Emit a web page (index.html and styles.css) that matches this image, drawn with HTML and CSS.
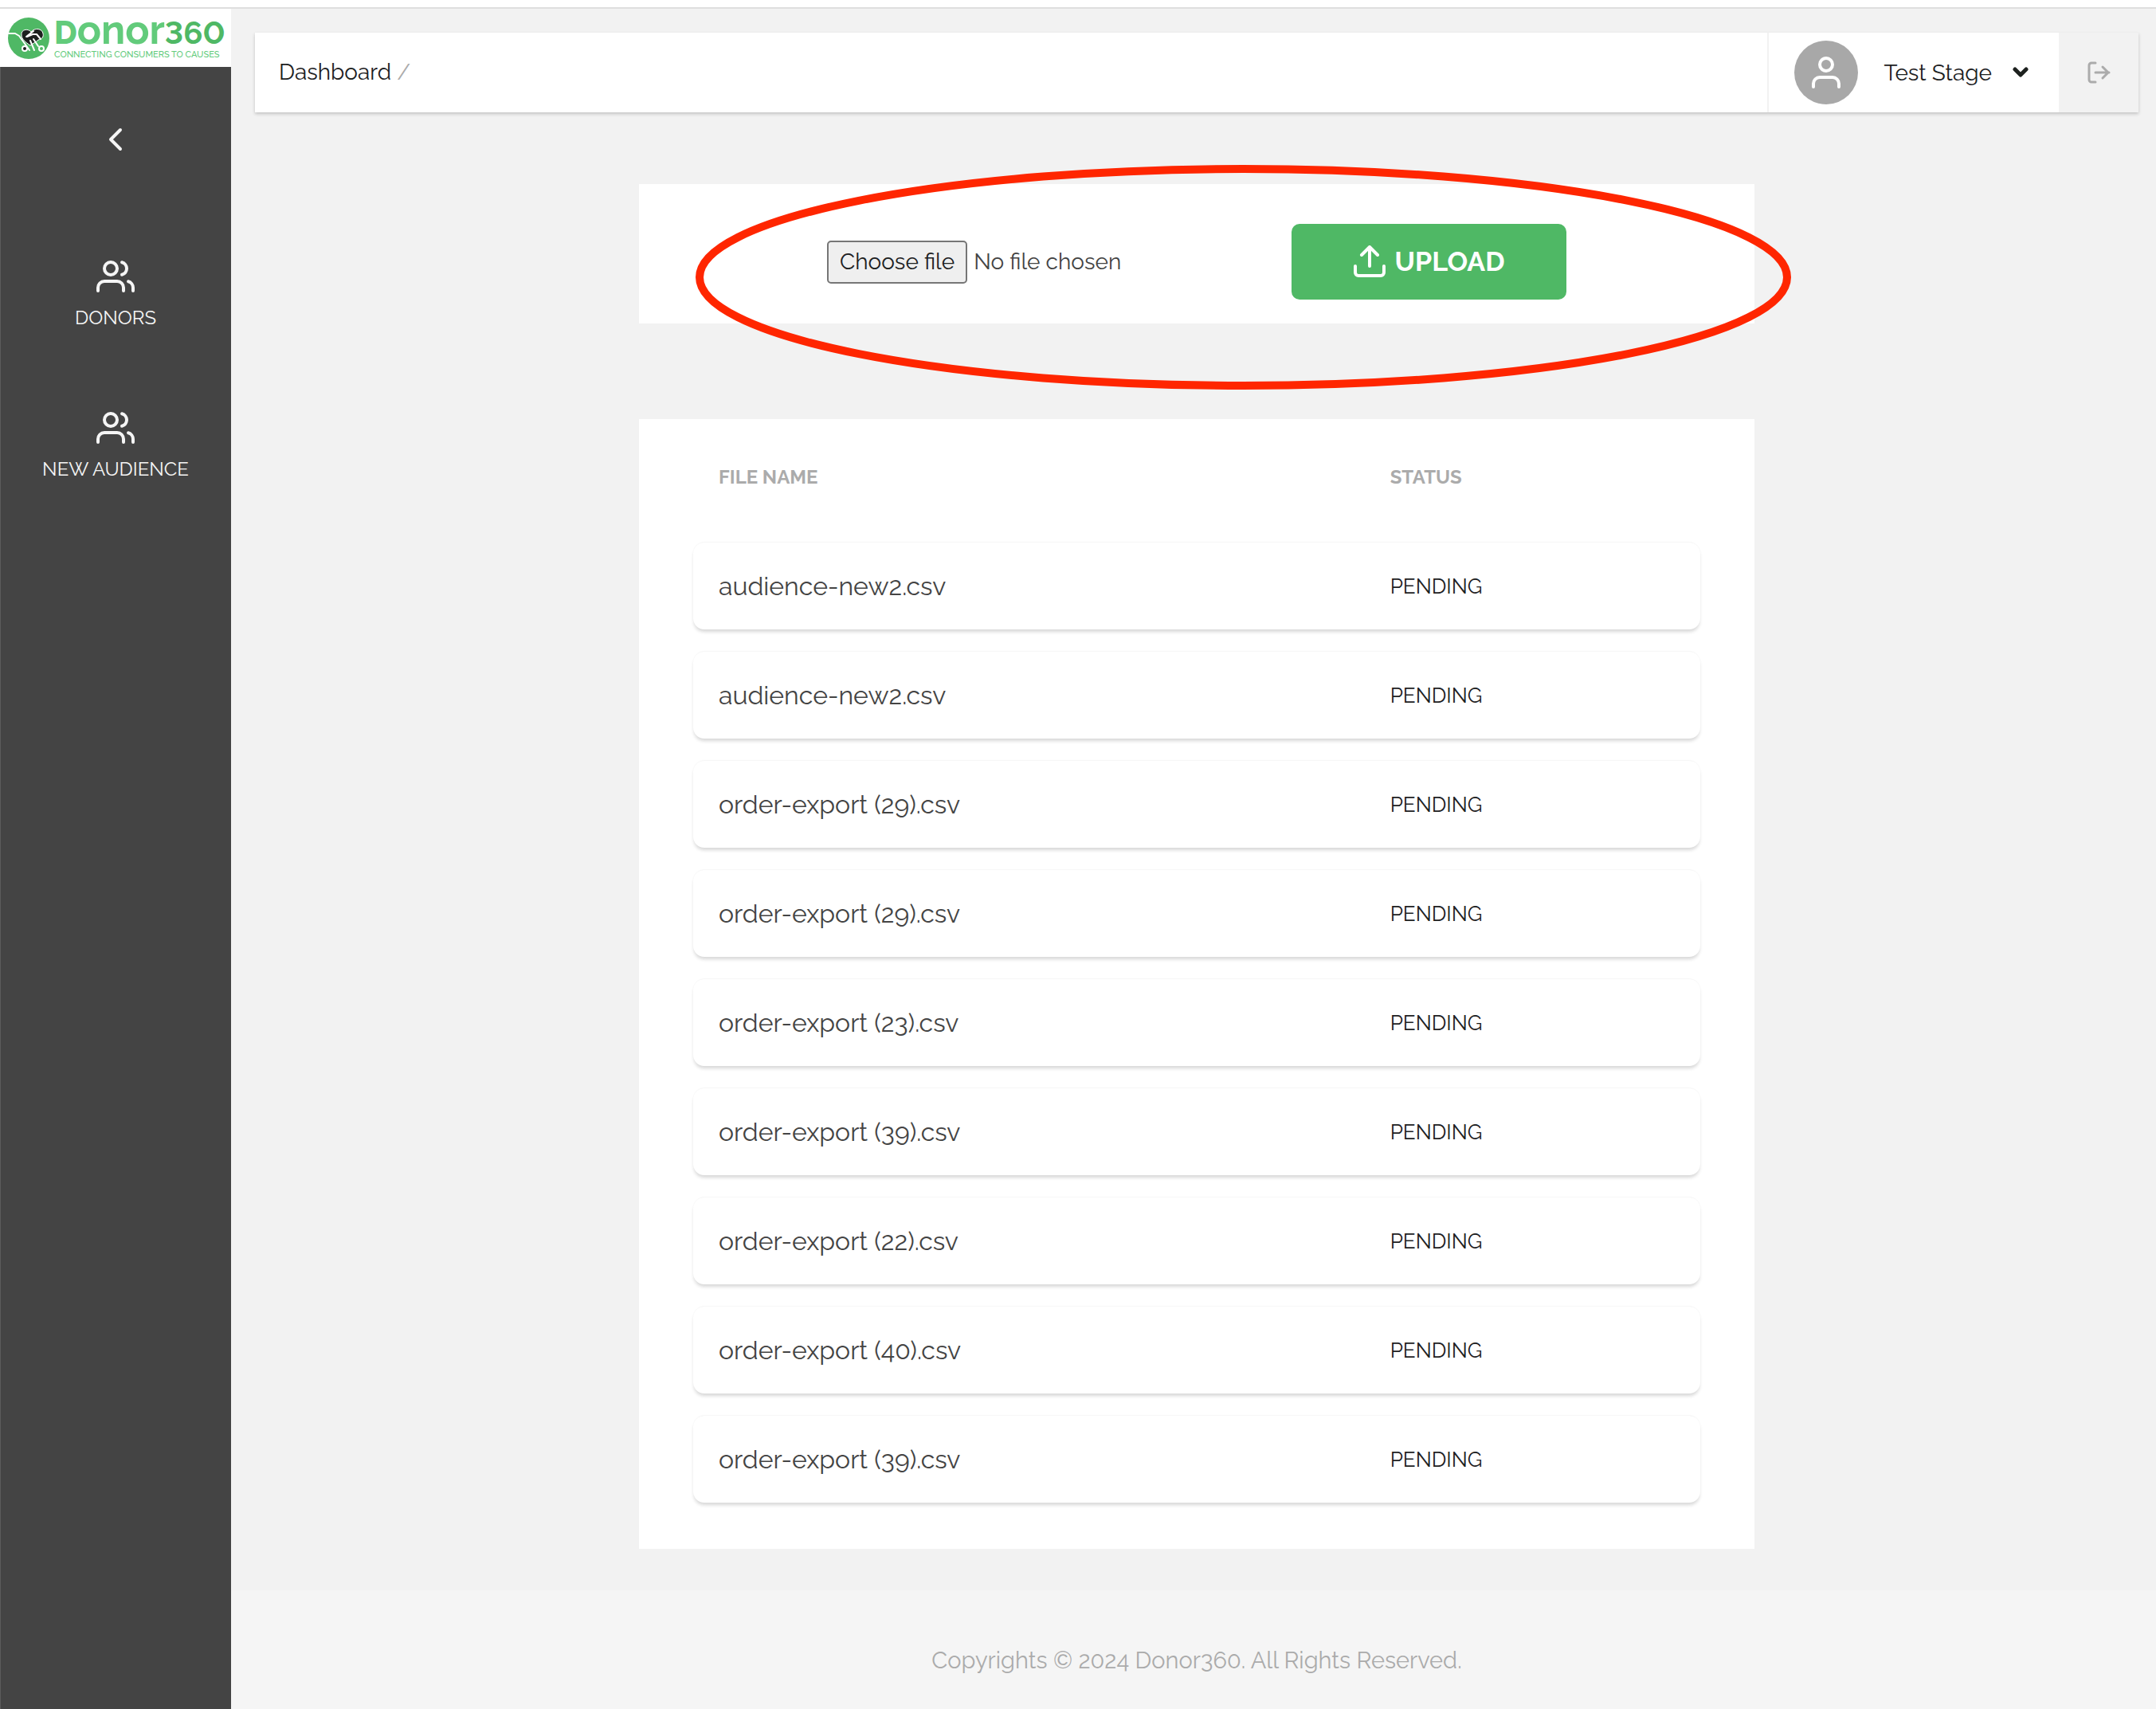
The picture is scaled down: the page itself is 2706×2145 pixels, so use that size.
FILE: index.html
```html
<!DOCTYPE html>
<html lang="en">
<head>
    <meta charset="UTF-8" />
    <meta name="viewport" content="width=device-width, initial-scale=1.0"/>
    <title>Donor360 - Dashboard</title>
    <link rel="stylesheet" href="styles.css">
</head>
<body>
    <div class="layout">
        <aside class="sidebar">
            <a class="logo" href="#">
                <svg class="logo-mark" viewBox="0 0 52 52" aria-hidden="true">
                    <circle cx="26" cy="26" r="26" fill="#4fb865"/>
                    <path d="M29 18c-4-5-13-3-12 4 0 5 5 9 11 13 4-3 7-4 10-7 5-1 7-4 6-8-1-6-10-8-15-2z" fill="#1d211f" stroke="#fff" stroke-width="1"/>
                    <path d="M1 20h8l5 3 13 18M23 24l9-7M24 24l7-3h5l5 6M28 29l5 12M32 27l6 9" fill="none" stroke="#fff" stroke-width="2" stroke-linecap="round"/>
                    <circle cx="21" cy="39" r="3" fill="#1d211f" stroke="#fff" stroke-width="2"/>
                    <circle cx="42" cy="39" r="3" fill="#4fb865" stroke="#fff" stroke-width="2"/>
                </svg>
                <span class="logo-text">
                    <span class="logo-name">D<span class="logo-tall">onor</span><span class="logo-number">360</span></span>
                    <span class="logo-tagline">CONNECTING CONSUMERS TO CAUSES</span>
                </span>
            </a>
            <button type="button" class="collapse-btn" aria-label="Collapse menu">
                <svg class="icon" viewBox="0 0 24 24"><path d="M15 18l-6-6 6-6"/></svg>
            </button>
            <nav class="menu">
                <a class="menu-item" href="#">
                    <svg class="icon" viewBox="0 0 24 24"><path d="M17 21v-2a4 4 0 0 0-4-4H5a4 4 0 0 0-4 4v2"/><circle cx="9" cy="7" r="4"/><path d="M23 21v-2a4 4 0 0 0-3-3.87M16 3.13a4 4 0 0 1 0 7.75"/></svg>
                    DONORS
                </a>
                <a class="menu-item" href="#">
                    <svg class="icon" viewBox="0 0 24 24"><path d="M17 21v-2a4 4 0 0 0-4-4H5a4 4 0 0 0-4 4v2"/><circle cx="9" cy="7" r="4"/><path d="M23 21v-2a4 4 0 0 0-3-3.87M16 3.13a4 4 0 0 1 0 7.75"/></svg>
                    NEW AUDIENCE
                </a>
            </nav>
        </aside>

        <div class="page">
            <header class="topbar">
                <div class="breadcrumb"><a href="#">Dashboard</a> <span class="separator">/</span></div>
                <button type="button" class="user-menu">
                    <span class="avatar">
                        <svg class="icon" viewBox="0 0 24 24"><path d="M20 21v-2a4 4 0 0 0-4-4H8a4 4 0 0 0-4 4v2"/><circle cx="12" cy="7" r="4"/></svg>
                    </span>
                    Test Stage
                    <svg class="caret" viewBox="0 0 20 14"><path d="M3 3l7 7 7-7"/></svg>
                </button>
                <button type="button" class="logout-btn" aria-label="Log out">
                    <svg class="logout-icon" viewBox="0 0 30 30"><path d="M11 3H6a3 3 0 0 0-3 3v18a3 3 0 0 0 3 3h5M11 15h17M20 8l7 7-7 7"/></svg>
                </button>
            </header>

            <main class="content">
                <form class="card upload-card">
                    <div class="file-field">
                        <input type="file" id="audienceFile" class="file-input" accept=".csv">
                        <label for="audienceFile" class="file-btn">Choose file</label>
                        <span id="chosenFile">No file chosen</span>
                    </div>
                    <button type="submit" class="upload-btn">
                        <svg class="upload-icon" viewBox="0 0 40 40"><path d="M2 26v8a4 4 0 0 0 4 4h28a4 4 0 0 0 4-4v-8M20 3v23M10 12L20 2l10 10"/></svg>
                        UPLOAD
                    </button>
                    <div class="highlight">
                        <svg class="highlight-ring"><ellipse cx="50%" cy="50%" rx="50%" ry="50%"/></svg>
                    </div>
                </form>

                <section class="card files-card">
                    <table class="files">
                        <thead>
                            <tr><th class="name-col">FILE NAME</th><th>STATUS</th></tr>
                        </thead>
                        <tbody>
                            <tr><td class="file-name">audience-new2.csv</td><td>PENDING</td></tr>
                            <tr><td class="file-name">audience-new2.csv</td><td>PENDING</td></tr>
                            <tr><td class="file-name">order-export (29).csv</td><td>PENDING</td></tr>
                            <tr><td class="file-name">order-export (29).csv</td><td>PENDING</td></tr>
                            <tr><td class="file-name">order-export (23).csv</td><td>PENDING</td></tr>
                            <tr><td class="file-name">order-export (39).csv</td><td>PENDING</td></tr>
                            <tr><td class="file-name">order-export (22).csv</td><td>PENDING</td></tr>
                            <tr><td class="file-name">order-export (40).csv</td><td>PENDING</td></tr>
                            <tr><td class="file-name">order-export (39).csv</td><td>PENDING</td></tr>
                        </tbody>
                    </table>
                </section>
            </main>

            <footer class="footer">Copyrights © 2024 Donor360. All Rights Reserved.</footer>
        </div>
    </div>
</body>
</html>
```
FILE: styles.css
```css
* {
    box-sizing: border-box;
}
body {
    font-family: Raleway, Lato, sans-serif;
    font-size: 28px;
    color: #1d211f;
    background-color: #f2f2f2;
    margin: 0;
    border-top: 9px solid #ffffff;
}
a {
    color: inherit;
    text-decoration: none;
}
button {
    font: inherit;
    color: inherit;
    background: none;
    border: none;
    padding: 0;
    cursor: pointer;
}
svg {
    display: block;
    flex: none;
    fill: none;
    stroke: currentColor;
    stroke-width: 2;
    stroke-linecap: round;
    stroke-linejoin: round;
}
.icon {
    width: 48px;
    height: 48px;
}
.layout {
    display: flex;
    min-height: calc(100vh - 9px);
    border-top: 2px solid #dedede;
}

/* Sidebar */
.sidebar {
    flex: none;
    width: 290px;
    background: #444444;
    color: #f5f5f5;
    box-shadow: inset 1px 0 #5c5c5c;
    display: flex;
    flex-direction: column;
    align-items: center;
}
.logo {
    width: 100%;
    height: 73px;
    padding: 0 10px;
    display: flex;
    align-items: center;
    gap: 6px;
    background: #ffffff;
    color: #62cb7b;
}
.logo-mark {
    width: 52px;
    height: 52px;
    stroke: none;
}
.logo-text {
    display: flex;
    flex-direction: column;
    gap: 4px;
}
.logo-name {
    font-size: 40px;
    font-weight: 800;
    line-height: 36px;
    white-space: nowrap;
}
.logo-tall {
    font-size: 50px;
    font-weight: 700;
    line-height: 36px;
}
.logo-number {
    color: #4fb865;
    font-weight: 700;
    font-variant-numeric: lining-nums;
}
.logo-tagline {
    font-size: 11px;
    font-weight: 500;
    line-height: 12px;
    white-space: nowrap;
}
.collapse-btn {
    margin-top: 67px;
}
.menu {
    margin-top: 124px;
    display: flex;
    flex-direction: column;
    gap: 98px;
}
.menu-item {
    display: flex;
    flex-direction: column;
    align-items: center;
    gap: 12px;
    font-size: 24px;
    line-height: 32px;
}

/* Top bar */
.page {
    flex: 1;
    min-width: 0;
    display: flex;
    flex-direction: column;
}
.topbar {
    display: flex;
    height: 100px;
    margin: 30px 22px 0 30px;
    background: #ffffff;
    box-shadow: 0 2px 4px rgba(0, 0, 0, 0.2);
}
.breadcrumb {
    flex: 1;
    padding-left: 30px;
    line-height: 100px;
}
.separator {
    color: #ababab;
}
.user-menu {
    display: flex;
    align-items: center;
    padding: 0 38px 0 32px;
    border-left: 2px solid #f2f2f2;
}
.avatar {
    width: 80px;
    height: 80px;
    margin-right: 32px;
    display: flex;
    align-items: center;
    justify-content: center;
    border-radius: 50%;
    background: #a8a8a8;
    color: #ffffff;
}
.caret {
    width: 20px;
    height: 14px;
    margin-left: 26px;
    stroke-width: 5;
}
.logout-btn {
    width: 100px;
    display: flex;
    align-items: center;
    justify-content: center;
    background: #f2f2f2;
    color: #ababab;
}
.logout-icon {
    width: 30px;
    height: 30px;
    stroke-width: 3;
}

/* Content */
.content {
    flex: 1;
    padding: 90px 22px 52px 30px;
}
.card {
    max-width: 1400px;
    margin: 0 auto;
    background: #ffffff;
}
.upload-card {
    position: relative;
    display: flex;
    align-items: center;
    justify-content: space-between;
    height: 175px;
    padding: 20px 236px 0;
}
.file-field {
    display: flex;
    align-items: center;
    gap: 8px;
    color: #444444;
}
.file-input {
    position: absolute;
    opacity: 0;
    width: 1px;
    height: 1px;
}
.file-btn {
    padding: 0 14px;
    line-height: 50px;
    color: #1d211f;
    background: #efefef;
    border: 2px solid #767676;
    border-radius: 5px;
    cursor: pointer;
}
.upload-btn {
    width: 345px;
    height: 95px;
    padding-bottom: 2px;
    display: flex;
    align-items: center;
    justify-content: center;
    gap: 12px;
    background: #4fb865;
    border-radius: 10px;
    color: #ffffff;
    font-size: 34px;
    font-weight: 700;
}
.upload-icon {
    width: 40px;
    height: 40px;
    stroke-width: 4;
}
/* Red ring drawn over the upload form */
.highlight {
    position: absolute;
    top: -19px;
    right: -41px;
    bottom: -78px;
    left: 76px;
    pointer-events: none;
}
.highlight-ring {
    width: 100%;
    height: 100%;
    overflow: visible;
    stroke: #ff2600;
    stroke-width: 10;
}

.files-card {
    margin-top: 120px;
    padding: 0 68px 30px;
}
.files {
    width: 100%;
    table-layout: fixed;
    border-spacing: 0 28px;
}
.files th {
    height: 99px;
    padding: 0 32px 10px;
    font-size: 24px;
    text-align: left;
    color: #ababab;
}
.files .name-col {
    width: calc(200% / 3);
}
.files td {
    height: 109px;
    padding: 0 32px;
    font-size: 26px;
}
.files tbody tr {
    border-radius: 14px;
    box-shadow: 0 4px 4px -1px rgba(0, 0, 0, 0.16), 0 -1px 2px -1px rgba(0, 0, 0, 0.12);
}
.files .file-name {
    font-size: 32px;
    color: #444444;
}

.footer {
    padding: 72px 22px 45px 30px;
    background: #f5f5f5;
    color: #ababab;
    font-size: 29px;
    line-height: 32px;
    text-align: center;
}
```
